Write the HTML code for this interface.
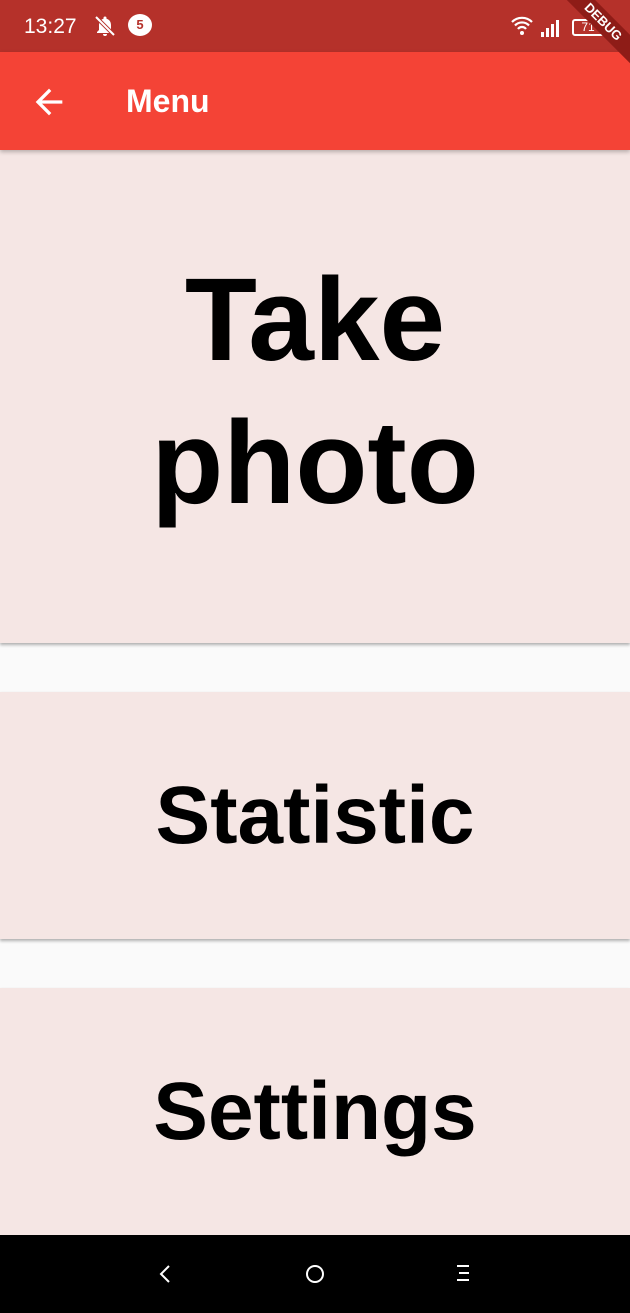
<!DOCTYPE html>
<html><head><style>
*{margin:0;padding:0;box-sizing:border-box}
body{width:630px;height:1313px;background:#fafafa;font-family:"Liberation Sans",sans-serif;position:relative;overflow:hidden}
.sb{position:absolute;top:0;left:0;width:630px;height:52px;background:#b5312a;color:#fff}
.ab{position:absolute;top:52px;left:0;width:630px;height:98px;background:#f44336;box-shadow:0 2px 4px rgba(0,0,0,.25);z-index:2}
.card{position:absolute;left:0;width:630px;background:#f5e6e4;box-shadow:0 2px 3px rgba(0,0,0,.3);display:flex;align-items:center;justify-content:center;text-align:center;color:#000;font-weight:bold}
.nav{position:absolute;top:1235px;left:0;width:630px;height:78px;background:#000}
</style></head><body>
<div class="sb">
<div style="position:absolute;left:24px;top:15px;font-size:21px">13:27</div>
<svg style="position:absolute;left:93px;top:14px" width="24" height="24" viewBox="0 0 24 24"><path d="M12 22a2 2 0 0 0 2-2h-4a2 2 0 0 0 2 2zm6-6v-5c0-3-1.6-5.6-4.5-6.3V4a1.5 1.5 0 0 0-3 0v.7C7.6 5.4 6 8 6 11v5l-2 2v1h16v-1z" fill="#fff"/><path d="M3 3l18 18" stroke="#b5312a" stroke-width="4"/><path d="M3 3l18 18" stroke="#fff" stroke-width="2"/></svg>
<div style="position:absolute;left:128px;top:14px;width:24px;height:22px;border-radius:50%;background:#fff;color:#b5312a;font-size:13px;text-align:center;line-height:22px;font-weight:bold">5</div>
<svg style="position:absolute;left:510px;top:15px" width="24" height="22" viewBox="0 0 24 22"><path d="M2 7a14 14 0 0 1 20 0M5 10.5a9.5 9.5 0 0 1 14 0M8 14a5 5 0 0 1 8 0" stroke="#fff" stroke-width="2.2" fill="none"/><circle cx="12" cy="18" r="2" fill="#fff"/></svg>
<svg style="position:absolute;left:540px;top:18px" width="22" height="20"><rect x="1" y="14" width="3" height="5" fill="#fff"/><rect x="6" y="10" width="3" height="9" fill="#fff"/><rect x="11" y="6" width="3" height="13" fill="#fff"/><rect x="16" y="2" width="3" height="17" fill="#fff"/></svg>
<div style="position:absolute;left:572px;top:19px;width:32px;height:17px;border:2px solid #fff;border-radius:3px;font-size:12px;text-align:center;line-height:13px">71</div>
<div style="position:absolute;left:548px;top:12px;width:110px;height:20px;background:#8e1c17;transform:rotate(45deg);color:#fff;font-size:13px;font-weight:bold;text-align:center;line-height:20px;z-index:5;transform-origin:center">DEBUG</div>
</div>
<div class="ab">
<svg style="position:absolute;left:29px;top:30px" width="40" height="40" viewBox="0 0 24 24"><path d="M20 11H7.8l5.6-5.6L12 4l-8 8 8 8 1.4-1.4L7.8 13H20z" fill="#fff"/></svg>
<div style="position:absolute;left:126px;top:31px;font-size:32px;font-weight:bold;color:#fff">Menu</div>
</div>
<div class="card" style="top:150px;height:493px;font-size:118px;line-height:143px"><div style="margin-top:-10px">Take<br>photo</div></div>
<div class="card" style="top:692px;height:247px;font-size:82px">Statistic</div>
<div class="card" style="top:988px;height:247px;font-size:82px">Settings</div>
<div class="nav">
<svg style="position:absolute;left:158px;top:29px" width="14" height="20"><path d="M11 2L3 10l8 8" stroke="#fff" stroke-width="2" fill="none"/></svg>
<div style="position:absolute;left:306px;top:30px;width:18px;height:18px;border:2px solid #fff;border-radius:50%"></div>
<svg style="position:absolute;left:455px;top:29px" width="16" height="18"><path d="M2 2h12M4 9h10M2 16h12" stroke="#fff" stroke-width="2"/></svg>
</div>
</body></html>
